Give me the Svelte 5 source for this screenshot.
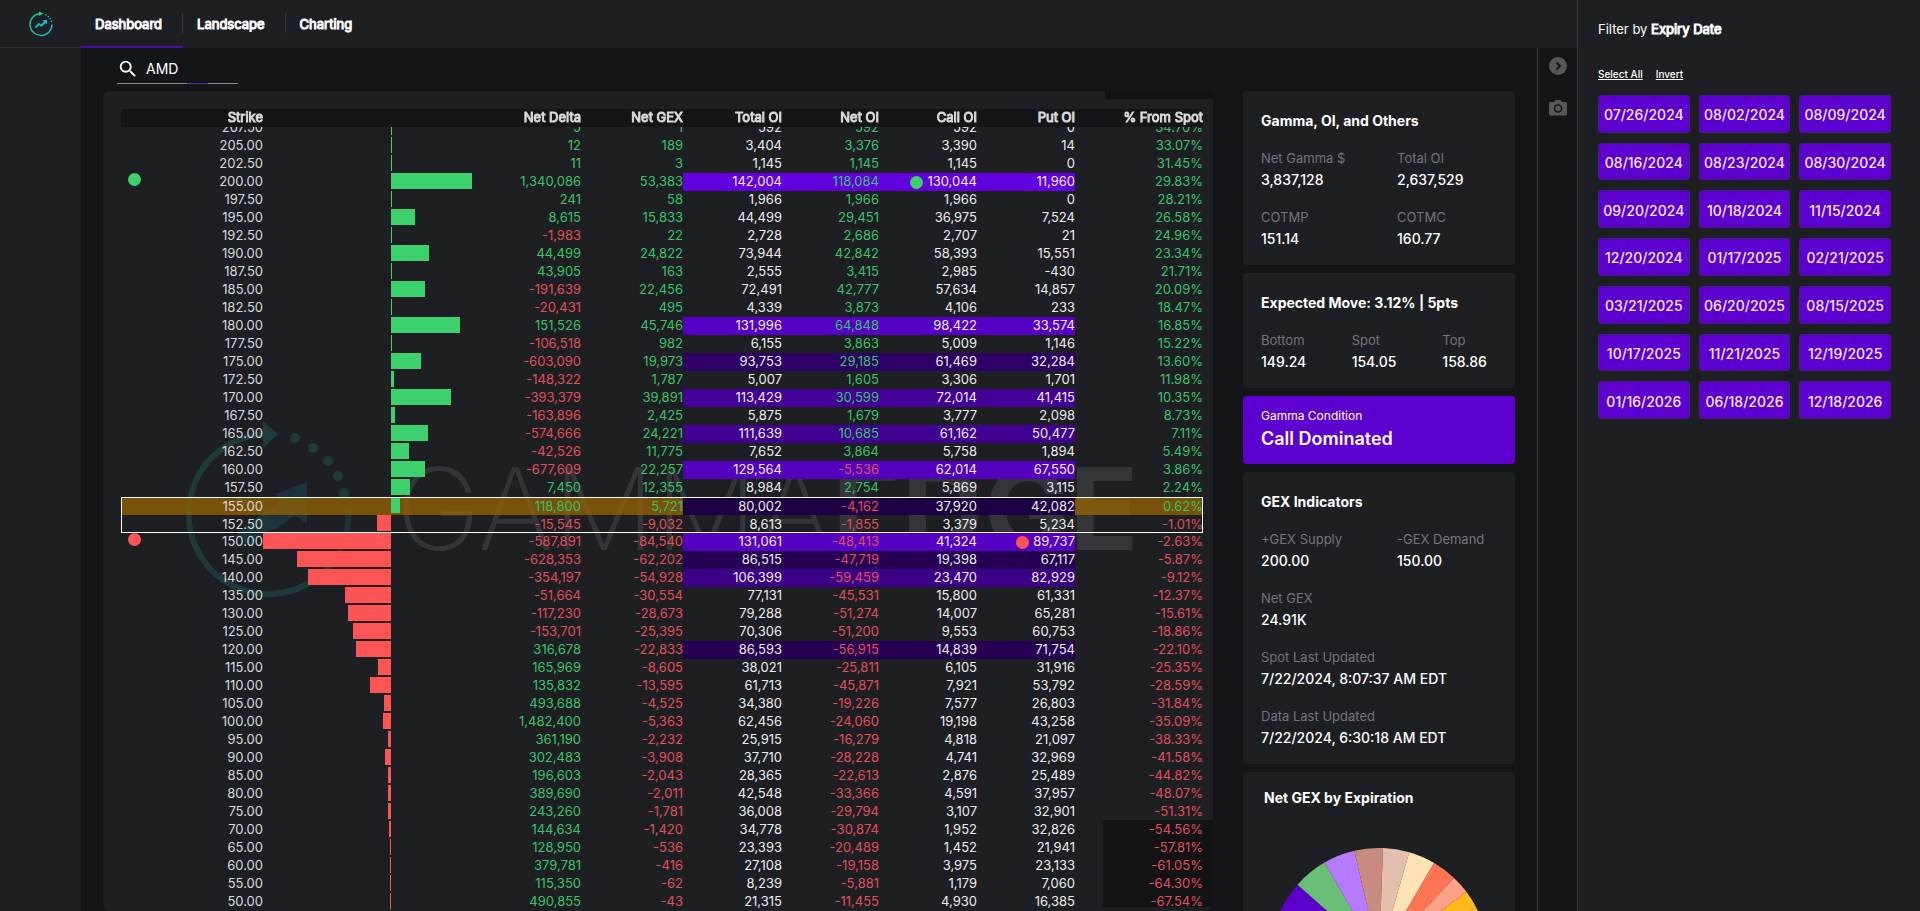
<script>
  import { onMount } from 'svelte';

  let scroller;
  let symbol = 'AMD';

  onMount(() => {
    scroller.scrollTop = 8;
  });

  const tabs = ['Dashboard', 'Landscape', 'Charting'];

  const columns = [
    { label: '', width: 40 },
    { label: 'Strike', width: 102 },
    { label: '', width: 256 },
    { label: 'Net Delta', width: 62 },
    { label: 'Net GEX', width: 102 },
    { label: 'Total OI', width: 99 },
    { label: 'Net OI', width: 97 },
    { label: 'Call OI', width: 98 },
    { label: 'Put OI', width: 98 },
    { label: '% From Spot', width: 128 }
  ];
  const totalWidth = columns.reduce((sum, c) => sum + c.width, 0);

  // strike | net delta | net gex | total oi | net oi | call oi | put oi | % from spot
  const source = `207.50|5|1|592|592|592|0|34.70%
205.00|12|189|3,404|3,376|3,390|14|33.07%
202.50|11|3|1,145|1,145|1,145|0|31.45%
200.00|1,340,086|53,383|142,004|118,084|130,044|11,960|29.83%
197.50|241|58|1,966|1,966|1,966|0|28.21%
195.00|8,615|15,833|44,499|29,451|36,975|7,524|26.58%
192.50|-1,983|22|2,728|2,686|2,707|21|24.96%
190.00|44,499|24,822|73,944|42,842|58,393|15,551|23.34%
187.50|43,905|163|2,555|3,415|2,985|-430|21.71%
185.00|-191,639|22,456|72,491|42,777|57,634|14,857|20.09%
182.50|-20,431|495|4,339|3,873|4,106|233|18.47%
180.00|151,526|45,746|131,996|64,848|98,422|33,574|16.85%
177.50|-106,518|982|6,155|3,863|5,009|1,146|15.22%
175.00|-603,090|19,973|93,753|29,185|61,469|32,284|13.60%
172.50|-148,322|1,787|5,007|1,605|3,306|1,701|11.98%
170.00|-393,379|39,891|113,429|30,599|72,014|41,415|10.35%
167.50|-163,896|2,425|5,875|1,679|3,777|2,098|8.73%
165.00|-574,666|24,221|111,639|10,685|61,162|50,477|7.11%
162.50|-42,526|11,775|7,652|3,864|5,758|1,894|5.49%
160.00|-677,609|22,257|129,564|-5,536|62,014|67,550|3.86%
157.50|7,450|12,355|8,984|2,754|5,869|3,115|2.24%
155.00|118,800|5,721|80,002|-4,162|37,920|42,082|0.62%
152.50|-15,545|-9,032|8,613|-1,855|3,379|5,234|-1.01%
150.00|-587,891|-84,540|131,061|-48,413|41,324|89,737|-2.63%
145.00|-628,353|-62,202|86,515|-47,719|19,398|67,117|-5.87%
140.00|-354,197|-54,928|106,399|-59,459|23,470|82,929|-9.12%
135.00|-51,664|-30,554|77,131|-45,531|15,800|61,331|-12.37%
130.00|-117,230|-28,673|79,288|-51,274|14,007|65,281|-15.61%
125.00|-153,701|-25,395|70,306|-51,200|9,553|60,753|-18.86%
120.00|316,678|-22,833|86,593|-56,915|14,839|71,754|-22.10%
115.00|165,969|-8,605|38,021|-25,811|6,105|31,916|-25.35%
110.00|135,832|-13,595|61,713|-45,871|7,921|53,792|-28.59%
105.00|493,688|-4,525|34,380|-19,226|7,577|26,803|-31.84%
100.00|1,482,400|-5,363|62,456|-24,060|19,198|43,258|-35.09%
95.00|361,190|-2,232|25,915|-16,279|4,818|21,097|-38.33%
90.00|302,483|-3,908|37,710|-28,228|4,741|32,969|-41.58%
85.00|196,603|-2,043|28,365|-22,613|2,876|25,489|-44.82%
80.00|389,690|-2,011|42,548|-33,366|4,591|37,957|-48.07%
75.00|243,260|-1,781|36,008|-29,794|3,107|32,901|-51.31%
70.00|144,634|-1,420|34,778|-30,874|1,952|32,826|-54.56%
65.00|128,950|-536|23,393|-20,489|1,452|21,941|-57.81%
60.00|379,781|-416|27,108|-19,158|3,975|23,133|-61.05%
55.00|115,350|-62|8,239|-5,881|1,179|7,060|-64.30%
50.00|490,855|-43|21,315|-11,455|4,930|16,385|-67.54%`;

  const toNumber = (text) => Number(text.replace(/[,%]/g, ''));
  const maxGex = 84540;
  const maxTotal = 142004;

  // The larger the total open interest, the brighter the violet.
  function heat(total) {
    if (total < 80000) return 'transparent';
    const t = 0.3 + (0.7 * (total - 80000)) / (maxTotal - 80000);
    return `rgb(${Math.round(98 * t)}, 0, ${Math.round(222 * t)})`;
  }

  const rows = source.split('\n').map((line) => {
    const [strike, delta, gex, total, net, call, put, spot] = line.split('|');
    const gexValue = toNumber(gex);
    return {
      strike, delta, gex, total, net, call, put, spot,
      bar: (Math.abs(gexValue) / maxGex) * 50,
      down: gexValue < 0,
      heat: heat(toNumber(total))
    };
  });

  const groups = [
    { rows: rows.slice(0, 21), spot: false },
    { rows: rows.slice(21, 23), spot: true },
    { rows: rows.slice(23), spot: false }
  ];

  const sign = (text) => (text.startsWith('-') ? 'neg' : 'pos');

  const dates = [
    '07/26/2024', '08/02/2024', '08/09/2024',
    '08/16/2024', '08/23/2024', '08/30/2024',
    '09/20/2024', '10/18/2024', '11/15/2024',
    '12/20/2024', '01/17/2025', '02/21/2025',
    '03/21/2025', '06/20/2025', '08/15/2025',
    '10/17/2025', '11/21/2025', '12/19/2025',
    '01/16/2026', '06/18/2026', '12/18/2026'
  ];

  const slices = [
    { from: -110, to: -48.4, color: '#5a00c8' },
    { from: -48.4, to: -30, color: '#69bf78' },
    { from: -30, to: -13.1, color: '#b57aff' },
    { from: -13.1, to: 2.1, color: '#c98b80' },
    { from: 2.1, to: 16.1, color: '#e4beae' },
    { from: 16.1, to: 30.4, color: '#fce3b4' },
    { from: 30.4, to: 43.5, color: '#ff7552' },
    { from: 43.5, to: 53.3, color: '#ffa18a' },
    { from: 53.3, to: 63.2, color: '#ffb81c' },
    { from: 63.2, to: 110, color: '#ffc45a' }
  ];

  function slicePath({ from, to }) {
    const point = (deg) => {
      const a = (deg * Math.PI) / 180;
      return `${(109 + 109 * Math.sin(a)).toFixed(2)} ${(109 - 109 * Math.cos(a)).toFixed(2)}`;
    };
    return `M109 109L${point(from)}A109 109 0 0 1 ${point(to)}Z`;
  }
</script>

<div class="app">
  <div class="workspace">
    <header>
      <a class="logo" href="#home" aria-label="GammaEdge home">
        <svg viewBox="0 0 26 26" width="26" height="26" fill="none">
          <defs>
            <linearGradient id="ring" x1="0" y1="0" x2="1" y2="1">
              <stop offset="0" stop-color="#12c48b" />
              <stop offset="1" stop-color="#1fb5d8" />
            </linearGradient>
          </defs>
          <path d="M12 2.500A11 11 0 1 0 24 13.500" stroke="url(#ring)" stroke-width="1.400" />
          <path d="M11 0.500L15.500 2.500L11 4.800Z" fill="#19d68c" />
          <g fill="#1ed0a4">
            <circle cx="18" cy="4" r="0.800" /><circle cx="20.300" cy="5.600" r="0.800" />
            <circle cx="22.200" cy="7.700" r="0.800" /><circle cx="23.400" cy="10.200" r="0.800" />
          </g>
          <path d="M7.500 16.500L11 13L13.500 14.500L17.500 10.500" stroke="url(#ring)" stroke-width="2" />
          <path d="M14.500 9.200L19.200 8.800L18.700 13.500Z" fill="#1fb8d8" />
        </svg>
      </a>
      <nav>
        {#each tabs as tab, i}
          <a class="tab" class:active={i === 0} href="#{tab.toLowerCase()}">{tab}</a>
        {/each}
      </nav>
    </header>

    <div class="body">
      <aside class="side"></aside>

      <main>
        <label class="search">
          <svg viewBox="0 0 24 24" width="22" height="22" fill="#fff" aria-hidden="true">
            <path d="M15.500 14h-.79l-.28-.27A6.471 6.471 0 0 0 16 9.500 6.500 6.500 0 1 0 9.500 16c1.610 0 3.090-.59 4.230-1.570l.27.28v.79l5 4.990L20.490 19l-4.990-5zm-6 0C7.010 14 5 11.990 5 9.500S7.010 5 9.500 5 14 7.010 14 9.500 11.990 14 9.500 14z" />
          </svg>
          <input type="text" bind:value={symbol} aria-label="Symbol" />
        </label>

        <div class="columns">
          <section class="card levels">
            <div class="shade top"></div>
            <div class="shade bottom"></div>
            <svg class="watermark" viewBox="0 0 960 180" width="960" height="180" fill="none" aria-hidden="true">
              <g stroke="#1c3b39" stroke-width="6">
                <path d="M86 14A80 80 0 1 0 155 134" />
                <path d="M155 134A80 80 0 0 0 165 86" stroke="#1d3138" />
              </g>
              <path d="M80 1L95 14L80 28Z" fill="#1c3b39" />
              <g fill="#1c3b39">
                <circle cx="112" cy="18" r="5" /><circle cx="130" cy="28" r="5" />
                <circle cx="145" cy="41" r="5" /><circle cx="155" cy="56" r="5" /><circle cx="161" cy="73" r="5" />
              </g>
              <path d="M92 74L124 62V104L112 95L92 110L82 92L100 80Z" fill="#1c333d" />
              <path d="M52 116L82 90L94 108L82 112L66 126Z" fill="#1c3639" />
              <text x="213" y="130" font-size="114" fill="#343538"><tspan font-weight="200">GAMMA</tspan><tspan font-weight="700">EDGE</tspan></text>
            </svg>

            <div class="scroller" bind:this={scroller}>
              <table>
                <colgroup>
                  {#each columns as c}
                    <col style="width: {(c.width / totalWidth) * 100}%" />
                  {/each}
                </colgroup>
                <thead>
                  <tr>
                    {#each columns as c}<th scope="col">{c.label}</th>{/each}
                  </tr>
                </thead>
                {#each groups as group}
                  <tbody class:spot={group.spot}>
                    {#each group.rows as r}
                      <tr class:current={r.strike === '155.00'}>
                        <td class="marker">
                          {#if r.strike === '200.00'}<i class="dot green"></i>{/if}
                          {#if r.strike === '150.00'}<i class="dot red"></i>{/if}
                        </td>
                        <td class="strike">{r.strike}</td>
                        <td>
                          <div class="bar" class:down={r.down} style="width: {r.bar}%"></div>
                        </td>
                        <td class={sign(r.delta)}>{r.delta}</td>
                        <td class={sign(r.gex)}>{r.gex}</td>
                        <td style="background-color: {r.heat}">{r.total}</td>
                        <td class={sign(r.net)} style="background-color: {r.heat}">{r.net}</td>
                        <td style="background-color: {r.heat}">
                          {#if r.strike === '200.00'}<i class="dot green inline"></i>{/if}{r.call}
                        </td>
                        <td style="background-color: {r.heat}">
                          {#if r.strike === '150.00'}<i class="dot red inline"></i>{/if}{r.put}
                        </td>
                        <td class={sign(r.spot)}>{r.spot}</td>
                      </tr>
                    {/each}
                  </tbody>
                {/each}
              </table>
            </div>
          </section>

          <div class="stats">
            <section class="card">
              <h2>Gamma, OI, and Others</h2>
              <dl class="two">
                <div><dt>Net Gamma $</dt><dd>3,837,128</dd></div>
                <div><dt>Total OI</dt><dd>2,637,529</dd></div>
                <div><dt>COTMP</dt><dd>151.14</dd></div>
                <div><dt>COTMC</dt><dd>160.77</dd></div>
              </dl>
            </section>
            <section class="card">
              <h2>Expected Move: 3.12% | 5pts</h2>
              <dl class="three">
                <div><dt>Bottom</dt><dd>149.24</dd></div>
                <div><dt>Spot</dt><dd>154.05</dd></div>
                <div><dt>Top</dt><dd>158.86</dd></div>
              </dl>
            </section>
            <section class="card condition">
              <p>Gamma Condition</p>
              <strong>Call Dominated</strong>
            </section>
            <section class="card">
              <h2>GEX Indicators</h2>
              <dl class="two">
                <div><dt>+GEX Supply</dt><dd>200.00</dd></div>
                <div><dt>-GEX Demand</dt><dd>150.00</dd></div>
                <div class="wide"><dt>Net GEX</dt><dd>24.91K</dd></div>
                <div class="wide"><dt>Spot Last Updated</dt><dd>7/22/2024, 8:07:37 AM EDT</dd></div>
                <div class="wide"><dt>Data Last Updated</dt><dd>7/22/2024, 6:30:18 AM EDT</dd></div>
              </dl>
            </section>
            <section class="card expiration">
              <h2>Net GEX by Expiration</h2>
              <svg viewBox="0 0 218 218" width="218" height="218" role="img" aria-label="Net GEX by expiration">
                {#each slices as slice}
                  <path d={slicePath(slice)} fill={slice.color} />
                {/each}
              </svg>
            </section>
          </div>
        </div>
      </main>

      <div class="rail">
        <button type="button" aria-label="Collapse panel">
          <svg viewBox="0 0 18 18" width="18" height="18">
            <circle cx="9" cy="9" r="9" fill="#56575b" />
            <path d="M7.500 5.500L11 9L7.500 12.500" fill="none" stroke="#141518" stroke-width="2" />
          </svg>
        </button>
        <button type="button" aria-label="Take snapshot">
          <svg viewBox="0 0 18 18" width="18" height="18">
            <path d="M6.500 1L5 3H1.500A1.500 1.500 0 0 0 0 4.500V15A1.500 1.500 0 0 0 1.500 16.500H16.500A1.500 1.500 0 0 0 18 15V4.500A1.500 1.500 0 0 0 16.500 3H13L11.500 1Z" fill="#56575b" />
            <circle cx="9" cy="9.500" r="3.500" fill="none" stroke="#141518" stroke-width="1.600" />
          </svg>
        </button>
      </div>
    </div>
  </div>

  <aside class="filter">
    <h1>Filter by <b>Expiry Date</b></h1>
    <div class="links">
      <a href="#all">Select All</a>
      <a href="#invert">Invert</a>
    </div>
    <div class="dates">
      {#each dates as date}
        <button type="button" aria-pressed="true">{date}</button>
      {/each}
    </div>
  </aside>
</div>

<style>
  :global(body) {
    background: #141518;
  }

  .app {
    display: flex;
    height: 100vh;
    overflow: hidden;
    background: #141518;
    color: #fff;
    font-family: Inter, "Liberation Sans", sans-serif;
    font-size: 13px;
  }

  .app :global(*) {
    box-sizing: border-box;
  }

  .workspace {
    flex: 1;
    min-width: 0;
    display: flex;
    flex-direction: column;
  }

  header {
    display: flex;
    height: 48px;
    background: #1e1f23;
  }

  .logo {
    width: 81px;
    display: flex;
    align-items: center;
    justify-content: center;
    border-bottom: 1px solid #313236;
  }

  nav {
    display: flex;
  }

  .tab {
    display: flex;
    align-items: center;
    padding: 2px 21px 0 14px;
    border-bottom: 2px solid transparent;
    background: linear-gradient(#35363a, #35363a) right 13px / 1px 20px no-repeat;
    color: #fff;
    text-decoration: none;
    -webkit-text-stroke: 1px;
  }

  .tab:last-child {
    background: none;
  }

  .tab.active {
    border-bottom-color: #5206b8;
  }

  .body {
    flex: 1;
    min-height: 0;
    display: flex;
  }

  .side {
    width: 81px;
    background: #1e1f23;
  }

  main {
    flex: 1;
    min-width: 0;
    display: flex;
    flex-direction: column;
    padding: 0 22px;
  }

  .search {
    display: flex;
    align-items: center;
    gap: 7px;
    width: 121px;
    height: 36px;
    margin: 0 0 7px 14px;
    padding-top: 6px;
    background: linear-gradient(90deg, #85868a 58%, #5b2ab0 58%, #5b2ab0 75%, #85868a 75%) bottom / 100% 1px no-repeat;
  }

  .search input {
    width: 80px;
    padding: 0;
    border: 0;
    outline: 0;
    background: none;
    color: #fff;
    font: 400 14px/20px Inter, "Liberation Sans", sans-serif;
  }

  .columns {
    flex: 1;
    min-height: 0;
    display: flex;
    gap: 30px;
  }

  .card {
    border-radius: 4px;
    background: #1e1f23;
  }

  .levels {
    position: relative;
    flex: 1;
    min-width: 0;
    display: flex;
    padding: 18px 10px 0 18px;
    border-radius: 8px;
  }

  .shade {
    position: absolute;
    background: #131315;
  }

  .shade.top {
    top: 0;
    right: 0;
    width: 108px;
    height: 8px;
  }

  .shade.bottom {
    right: 0;
    bottom: 4px;
    width: 110px;
    height: 87px;
  }

  .watermark {
    position: absolute;
    top: 329px;
    left: 80px;
  }

  .scroller {
    position: relative;
    flex: 1;
    min-width: 0;
    overflow: hidden;
    padding-bottom: 20px;
  }

  table {
    width: 100%;
    table-layout: fixed;
    border-spacing: 0;
  }

  th,
  td {
    height: 18px;
    padding: 0;
    line-height: 16px;
    text-align: right;
    vertical-align: top;
    white-space: nowrap;
  }

  th {
    position: sticky;
    top: 0;
    z-index: 1;
    background: #141518;
    color: #d8d8da;
    font-weight: 400;
    -webkit-text-stroke: 1px;
  }

  td {
    color: #ededf0;
  }

  .strike {
    color: #d9d9dc;
  }

  .pos {
    color: #36c468;
  }

  .neg {
    color: #e04f59;
  }

  .current {
    background: rgba(150, 100, 0, 0.75);
  }

  .spot {
    outline: 1px solid #fff;
    outline-offset: -1px;
  }

  .spot td {
    line-height: 18px;
  }

  .marker {
    text-align: left;
  }

  .dot {
    display: block;
    width: 13px;
    height: 13px;
    margin: 0 0 4px 7px;
    border-radius: 50%;
  }

  .dot.inline {
    display: inline-block;
    margin: 0 4px 0 0;
    vertical-align: -3px;
  }

  .green {
    background: #3dd16d;
  }

  .red {
    background: #ff5454;
  }

  .bar {
    min-width: 1px;
    height: 16px;
    margin-left: 50%;
    background: #3dd16d;
  }

  .bar.down {
    margin-left: auto;
    margin-right: 50%;
    background: #ff5454;
  }

  .stats {
    width: 272px;
    display: flex;
    flex-direction: column;
    gap: 8px;
    overflow: hidden;
  }

  .stats .card {
    flex: none;
  }

  h2 {
    margin: 0;
    padding: 18px 18px 14px;
    font-size: 14px;
    font-weight: 700;
    line-height: 24px;
  }

  dl {
    display: grid;
    row-gap: 15px;
    margin: 0;
    padding-bottom: 15px;
    line-height: 22px;
  }

  .two {
    grid-template-columns: repeat(2, 1fr);
  }

  .three {
    grid-template-columns: repeat(3, 1fr);
  }

  dl div {
    padding-left: 18px;
    white-space: nowrap;
  }

  .wide {
    grid-column: 1 / -1;
  }

  dt {
    color: #73747c;
  }

  dd {
    margin: 0;
    font-size: 14px;
    font-weight: 500;
  }

  .condition {
    padding: 10px 18px 12px;
    background: #5d00cf;
  }

  .condition p {
    margin: 0;
    font-size: 12px;
    line-height: 20px;
  }

  .condition strong {
    display: block;
    font-size: 18px;
    font-weight: 600;
    line-height: 26px;
  }

  .expiration h2 {
    padding: 14px 21px 38px;
  }

  .expiration svg {
    display: block;
    margin: 0 auto;
  }

  .rail {
    width: 40px;
    display: flex;
    flex-direction: column;
    align-items: center;
    gap: 24px;
    padding-top: 9px;
    border-left: 1px solid #35363a;
  }

  .rail button {
    display: flex;
    padding: 0;
    border: 0;
    background: none;
  }

  .filter {
    width: 343px;
    padding: 18px 29px 0 20px;
    border-left: 1px solid #35363a;
    background: #1e1f23;
  }

  h1 {
    margin: 0;
    font-size: 13px;
    font-weight: 400;
    line-height: 22px;
  }

  h1 b {
    font-weight: 400;
    -webkit-text-stroke: 1px;
  }

  .links {
    display: flex;
    gap: 13px;
    margin: 26px 0 13px;
    font-size: 10px;
    line-height: 16px;
  }

  .links a {
    color: #fff;
    font-weight: 500;
  }

  .dates {
    display: grid;
    grid-template-columns: repeat(3, 1fr);
    grid-auto-rows: 1fr;
    gap: 10px 9px;
    height: 324px;
  }

  .dates button {
    padding: 3px 0 0;
    border: 1px solid #4a1a8c;
    border-radius: 3px;
    background: #5d00cf;
    color: #f6eaff;
    font: 500 14px/20px Inter, "Liberation Sans", sans-serif;
  }
</style>
